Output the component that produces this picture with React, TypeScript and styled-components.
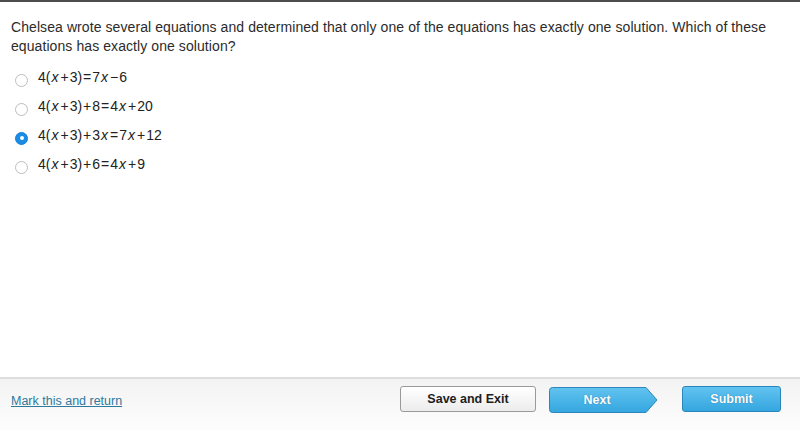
import React from "react";
import styled, { createGlobalStyle } from "styled-components";

const Global = createGlobalStyle`
  html, body { margin: 0; padding: 0; background: #fff; }
  body { font-family: "Liberation Sans", Arial, sans-serif; }
`;

const Page = styled.div`
  width: 800px;
  height: 430px;
  display: flex;
  flex-direction: column;
  border-top: 2px solid #4d4d4d;
  box-sizing: border-box;
  overflow: hidden;
`;

const Content = styled.div`
  flex: 1;
  padding: 16px 20px 0 11px;
`;

const Question = styled.p`
  margin: 0;
  font-size: 14px;
  line-height: 19px;
  letter-spacing: 0.08px;
  color: #2b2b2b;
`;

const Options = styled.div`
  margin-top: 6px;
  display: flex;
  flex-direction: column;
`;

const Option = styled.label`
  display: flex;
  align-items: center;
  height: 29px;
  cursor: pointer;
`;

const Radio = styled.span<{ $checked?: boolean }>`
  width: 13px;
  height: 13px;
  box-sizing: border-box;
  border-radius: 50%;
  margin: 7px 10px 0 4px;
  flex: none;
  display: flex;
  align-items: center;
  justify-content: center;
  background: ${(p) => (p.$checked ? "#1a8ce6" : "#fff")};
  border: ${(p) => (p.$checked ? "1px solid #1580d8" : "1px solid #bdbdbd")};
  &::after {
    content: "";
    display: ${(p) => (p.$checked ? "block" : "none")};
    width: 4px;
    height: 4px;
    border-radius: 50%;
    background: #fff;
  }
`;

const Eq = styled.span`
  font-size: 14px;
  color: #222;
  font-family: "Liberation Sans", Arial, sans-serif;
  white-space: nowrap;
`;

const V = styled.i`
  font-style: italic;
  margin: 0 1px;
`;

const Op = styled.span`
  margin: 0 1px;
`;

const Footer = styled.div`
  height: 53px;
  box-sizing: border-box;
  border-top: 2px solid #dedede;
  background: linear-gradient(#f3f3f3, #fdfdfd);
  display: flex;
  align-items: flex-start;
  padding: 7px 19px 0 11px;
`;

const MarkLink = styled.a`
  font-size: 12.5px;
  color: #2e7a9c;
  text-decoration: underline;
  margin-right: auto;
  margin-top: 8px;
`;

const BaseButton = styled.button`
  height: 26px;
  box-sizing: border-box;
  font-family: "Liberation Sans", Arial, sans-serif;
  font-weight: bold;
  font-size: 12.5px;
  padding: 0;
  cursor: pointer;
`;

const SaveButton = styled(BaseButton)`
  width: 136px;
  border: 1px solid #9a9a9a;
  border-radius: 3px;
  background: linear-gradient(#ffffff, #ececec);
  color: #1e1e1e;
  margin-right: 13px;
`;

const BlueButton = styled(BaseButton)`
  width: 99px;
  border: 1px solid #2a86bb;
  border-radius: 3px;
  background: linear-gradient(#62c3f0, #34a6df);
  color: #fff;
  text-shadow: 0 0 1px rgba(0, 60, 110, 0.6);
`;

const NextButton = styled(BaseButton)`
  position: relative;
  width: 109px;
  border: none;
  background: transparent;
  color: #fff;
  text-shadow: 0 0 1px rgba(0, 60, 110, 0.6);
  margin-right: 24px;
  margin-top: 1px;
`;

const NextShape = styled.svg`
  position: absolute;
  inset: 0;
`;

const NextLabel = styled.span`
  position: relative;
  display: block;
  width: 96px;
  text-align: center;
`;

const options = [
  { key: 1, checked: false, content: (<>4(<V>x</V><Op>+</Op>3)<Op>=</Op>7<V>x</V><Op>−</Op>6</>) },
  { key: 2, checked: false, content: (<>4(<V>x</V><Op>+</Op>3)<Op>+</Op>8<Op>=</Op>4<V>x</V><Op>+</Op>20</>) },
  { key: 3, checked: true, content: (<>4(<V>x</V><Op>+</Op>3)<Op>+</Op>3<V>x</V><Op>=</Op>7<V>x</V><Op>+</Op>12</>) },
  { key: 4, checked: false, content: (<>4(<V>x</V><Op>+</Op>3)<Op>+</Op>6<Op>=</Op>4<V>x</V><Op>+</Op>9</>) },
];

export default function App() {
  return (
    <Page>
      <Global />
      <Content>
        <Question>
          Chelsea wrote several equations and determined that only one of the equations has exactly one solution. Which of these equations has exactly one solution?
        </Question>
        <Options>
          {options.map((o) => (
            <Option key={o.key}>
              <Radio $checked={o.checked} />
              <Eq>{o.content}</Eq>
            </Option>
          ))}
        </Options>
      </Content>
      <Footer>
        <MarkLink href="#">Mark this and return</MarkLink>
        <SaveButton>Save and Exit</SaveButton>
        <NextButton>
          <NextShape width="109" height="26" viewBox="0 0 109 26">
            <defs>
              <linearGradient id="ng" x1="0" y1="0" x2="0" y2="1">
                <stop offset="0" stopColor="#62c3f0" />
                <stop offset="1" stopColor="#34a6df" />
              </linearGradient>
            </defs>
            <path d="M3.5 0.5 H97 L108 13 L97 25.5 H3.5 Q0.5 25.5 0.5 22.5 V3.5 Q0.5 0.5 3.5 0.5 Z" fill="url(#ng)" stroke="#2a86bb" strokeWidth="1" />
          </NextShape>
          <NextLabel>Next</NextLabel>
        </NextButton>
        <BlueButton>Submit</BlueButton>
      </Footer>
    </Page>
  );
}
